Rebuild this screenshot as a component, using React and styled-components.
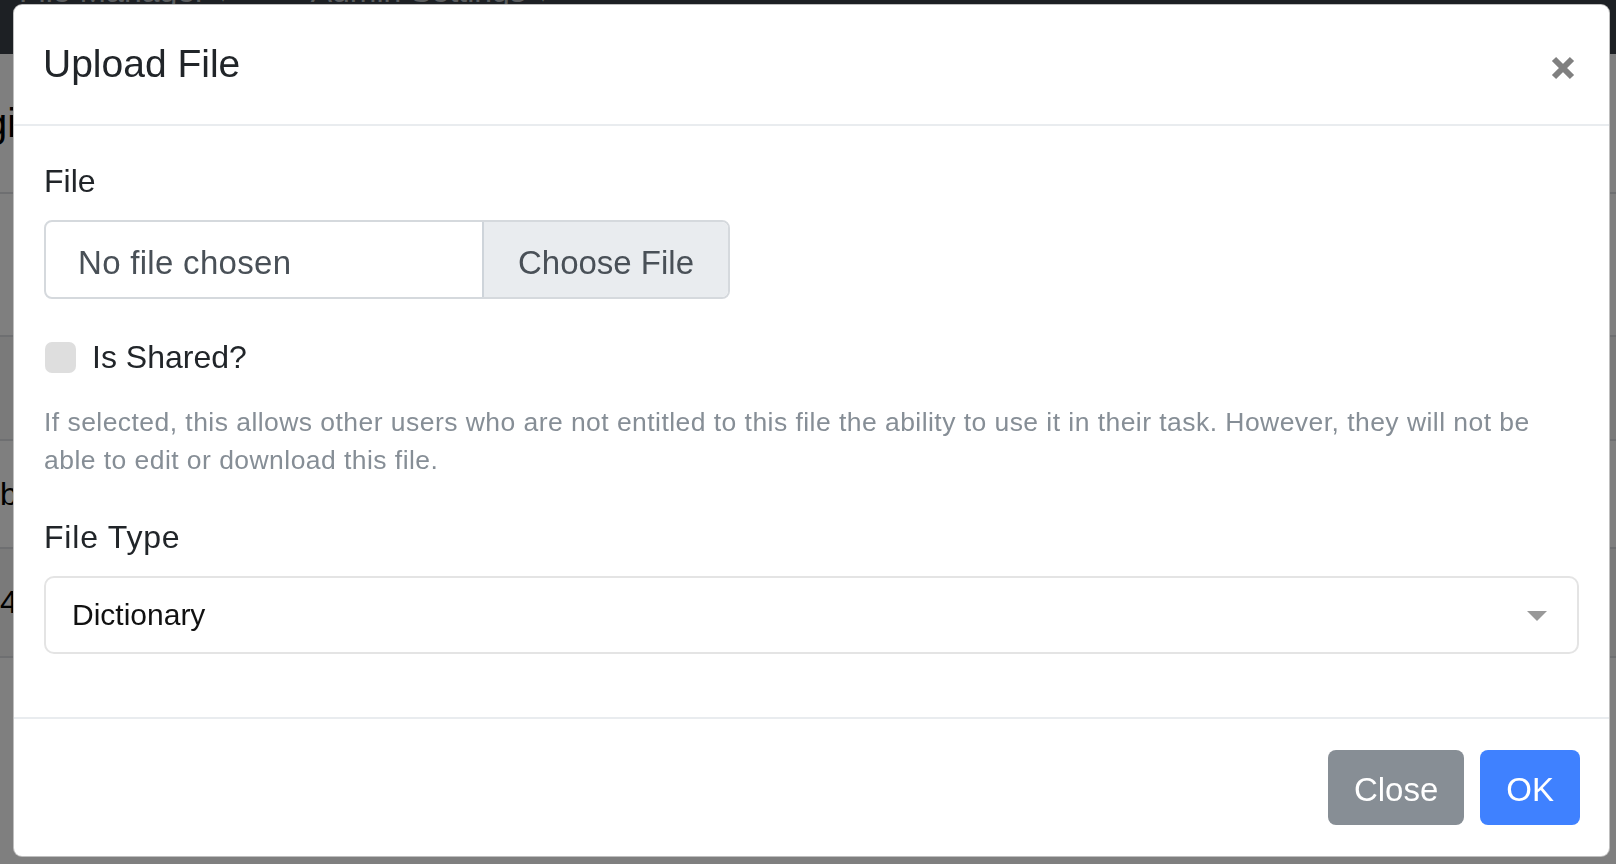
import React from "react";
import styled, { createGlobalStyle } from "styled-components";

const GlobalStyle = createGlobalStyle`
    html, body {
        margin: 0;
        padding: 0;
        height: 100%;
        overflow: hidden;
        background: #ffffff;
        font-family: "Liberation Sans", Arial, sans-serif;
    }
`;

// page behind the dialog
const Page = styled.div`
    width: 1616px;
    height: 864px;
    overflow: hidden;
`;

const NavBar = styled.div`
    height: 54px;
    background: #3a4148;
    display: flex;
    align-items: flex-start;
    gap: 80px;
    padding-left: 19px;
    overflow: hidden;
`;

const NavItem = styled.span`
    font-size: 32px;
    line-height: 32px;
    color: #b4b8bc;
    transform: translateY(-25px);
    white-space: nowrap;
`;

const PageHeading = styled.h1`
    margin: 0;
    height: 138px;
    display: flex;
    align-items: center;
    font-size: 40px;
    font-weight: 500;
    color: #000;
    text-indent: -15px;
    box-sizing: border-box;
`;

const TableRow = styled.div`
    height: ${(p) => p.$h}px;
    border-top: 2px solid #dcdfe2;
    display: flex;
    align-items: center;
    font-size: 32px;
    color: #000;
    box-sizing: border-box;
    background: ${(p) => (p.$shade ? "#f4f4f4" : "#ffffff")};
`;

// modal
const Backdrop = styled.div`
    position: fixed;
    inset: 0;
    background: rgba(0, 0, 0, 0.5);
    display: flex;
    padding: 4px 6px 7px 13px;
    box-sizing: border-box;
`;

const Modal = styled.div`
    flex: 1;
    display: flex;
    flex-direction: column;
    background: #fff;
    border: 1px solid rgba(0, 0, 0, 0.25);
    border-radius: 9px;
    overflow: hidden;
`;

const Header = styled.div`
    height: 119px;
    display: flex;
    align-items: center;
    justify-content: space-between;
    padding: 0 34px 0 29px;
    border-bottom: 2px solid #e9ecef;
    box-sizing: content-box;
`;

const Title = styled.h5`
    margin: 0;
    font-size: 39px;
    font-weight: 500;
    line-height: 1.2;
    color: #212529;
`;

const CloseButton = styled.button`
    background: none;
    border: none;
    padding: 0;
    cursor: pointer;
    display: flex;
    margin-top: 6px;
`;

const Body = styled.div`
    flex: 1;
    padding: 31px 30px 0 30px;
`;

const FormGroup = styled.div`
    margin-bottom: ${(p) => p.$mb}px;
`;

const Label = styled.label`
    display: block;
    font-size: 32px;
    line-height: 48px;
    color: #212529;
    margin-bottom: 15px;
    letter-spacing: ${(p) => p.$spacing || 0}px;
`;

const FileBox = styled.div`
    width: 686px;
    height: 79px;
    display: flex;
    border: 2px solid #d5d9dd;
    border-radius: 8px;
    box-sizing: border-box;
    overflow: hidden;
`;

const FileName = styled.div`
    flex: 1;
    display: flex;
    align-items: center;
    padding: 7px 0 0 32px;
    font-size: 33px;
    letter-spacing: 0.3px;
    color: #495057;
`;

const FileButton = styled.div`
    width: 244px;
    display: flex;
    align-items: center;
    justify-content: center;
    padding-top: 7px;
    background: #e9ecef;
    border-left: 2px solid #ced4da;
    font-size: 33px;
    color: #495057;
`;

const CheckRow = styled.label`
    display: flex;
    align-items: center;
    gap: 16px;
    height: 48px;
    font-size: 32px;
    color: #212529;
    cursor: pointer;
`;

const CheckBox = styled.span`
    width: 31px;
    height: 31px;
    border-radius: 7px;
    background: #dedede;
    display: inline-block;
    margin-left: 1px;
`;

const HelpText = styled.small`
    display: block;
    margin-top: 22px;
    font-size: 26.5px;
    letter-spacing: 0.45px;
    line-height: 38.4px;
    color: #868e96;
`;

const Select = styled.div`
    height: 78px;
    display: flex;
    align-items: center;
    justify-content: space-between;
    border: 2px solid #e4e4e4;
    border-radius: 10px;
    padding: 0 30px 0 26px;
    box-sizing: border-box;
    font-size: 30px;
    color: #111;
`;

const Caret = styled.span`
    width: 0;
    height: 0;
    border-left: 10px solid transparent;
    border-right: 10px solid transparent;
    border-top: 10px solid #999;
    margin-top: 2px;
`;

const Footer = styled.div`
    display: flex;
    justify-content: flex-end;
    gap: 16px;
    padding: 31px 29px 31px 0;
    border-top: 2px solid #e9ecef;
`;

const Button = styled.button`
    font-family: inherit;
    font-size: 33px;
    line-height: 49px;
    padding: 14px 25px 10px;
    border: 1px solid transparent;
    border-radius: 8px;
    color: #fff;
    background: ${(p) => (p.$primary ? "#3f81ff" : "#878e95")};
    cursor: pointer;
`;

function CloseIcon() {
    return (
        <svg width="24" height="24" viewBox="0 0 24 24">
            <path d="M3 3 L21 21 M21 3 L3 21" stroke="#808080" strokeWidth="6" strokeLinecap="butt" />
        </svg>
    );
}

export default function App() {
    return (
        <>
            <GlobalStyle />
            <Page>
                <NavBar>
                    <NavItem>File Manager ▾</NavItem>
                    <NavItem>Admin Settings ▾</NavItem>
                </NavBar>
                <PageHeading>gi</PageHeading>
                <TableRow $h={143}></TableRow>
                <TableRow $h={104} $shade></TableRow>
                <TableRow $h={108}>b</TableRow>
                <TableRow $h={109} $shade>4</TableRow>
                <TableRow $h={210}></TableRow>
            </Page>

            <Backdrop>
                <Modal>
                    <Header>
                        <Title>Upload File</Title>
                        <CloseButton aria-label="Close">
                            <CloseIcon />
                        </CloseButton>
                    </Header>

                    <Body>
                        <FormGroup $mb={34}>
                            <Label>File</Label>
                            <FileBox>
                                <FileName>No file chosen</FileName>
                                <FileButton>Choose File</FileButton>
                            </FileBox>
                        </FormGroup>

                        <FormGroup $mb={33}>
                            <CheckRow>
                                <CheckBox />
                                Is Shared?
                            </CheckRow>
                            <HelpText>
                                If selected, this allows other users who are not entitled to this file the ability to use it in their task. However, they will not be able to edit or download this file.
                            </HelpText>
                        </FormGroup>

                        <FormGroup $mb={0}>
                            <Label $spacing={0.8}>File Type</Label>
                            <Select>
                                Dictionary
                                <Caret />
                            </Select>
                        </FormGroup>
                    </Body>

                    <Footer>
                        <Button>Close</Button>
                        <Button $primary>OK</Button>
                    </Footer>
                </Modal>
            </Backdrop>
        </>
    );
}
